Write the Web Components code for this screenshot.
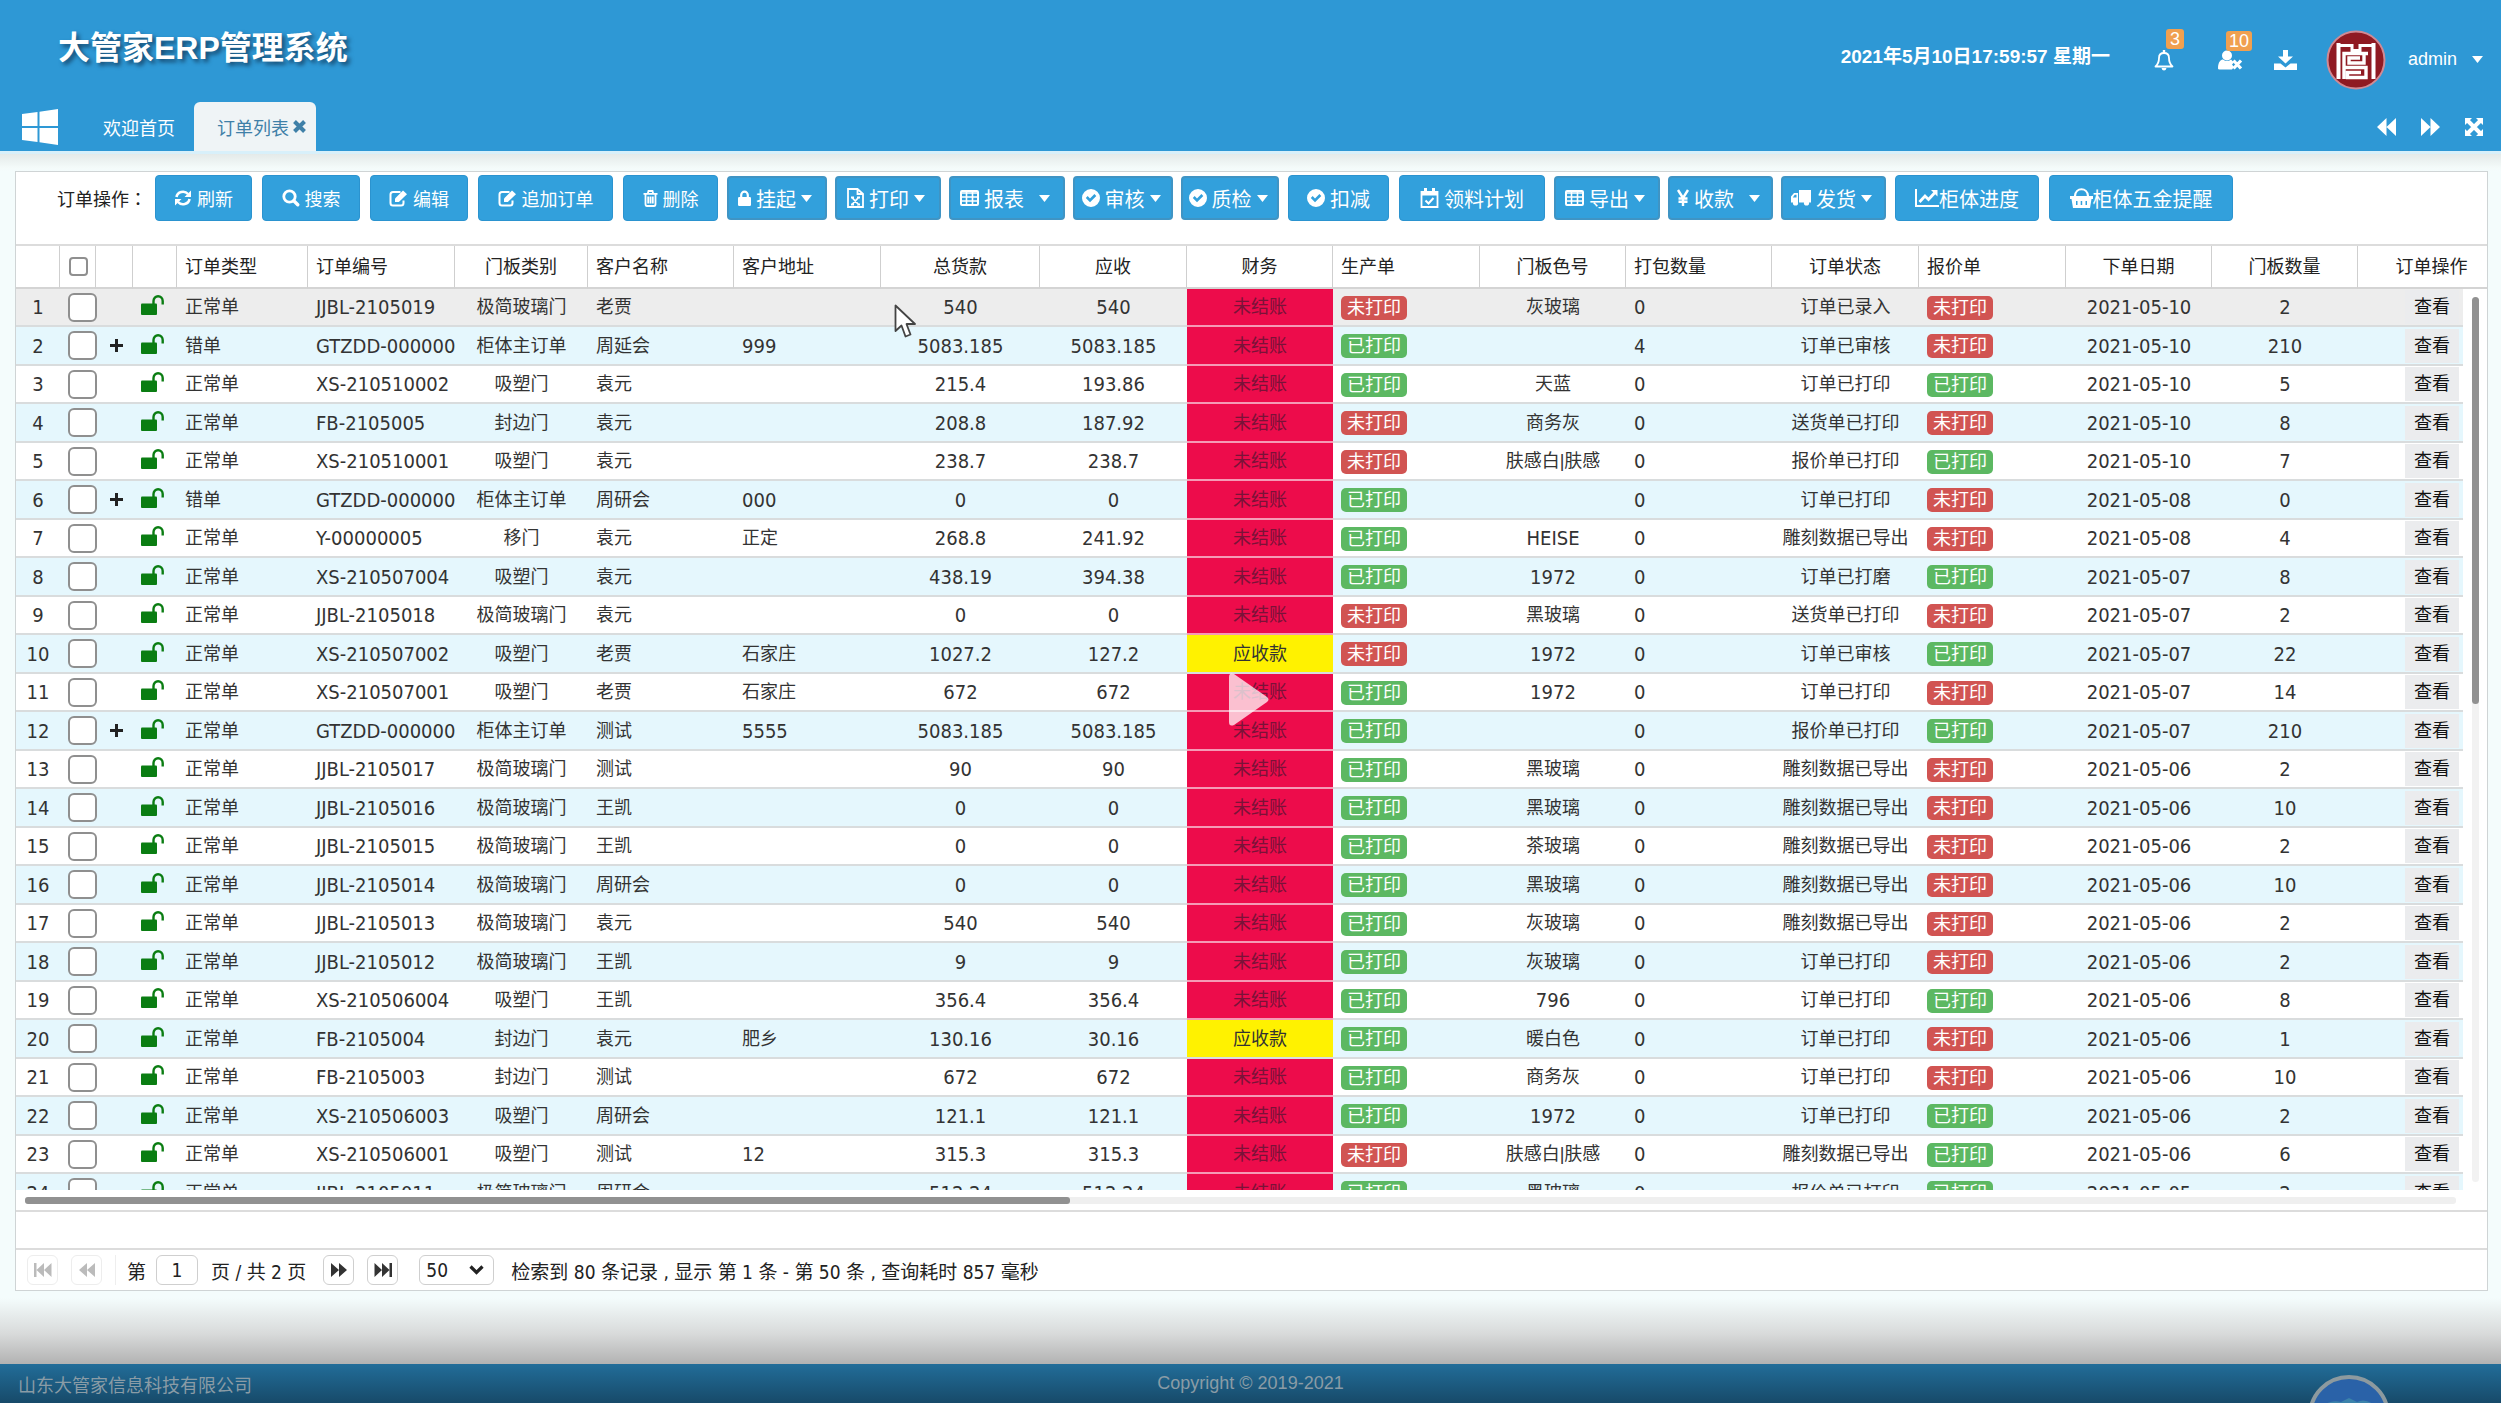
<!DOCTYPE html>
<html lang="zh-CN">
<head>
<meta charset="utf-8">
<title>大管家ERP管理系统</title>
<style>
html,body{height:100%;margin:0}
body{font-family:"Liberation Sans","Noto Sans CJK SC",sans-serif;font-size:18px;color:#333;overflow:hidden}
</style>
</head>
<body>
<erp-app></erp-app>
<script>
const define = (name, html, init) => {
  const tpl = document.createElement('template');
  tpl.innerHTML = html;
  customElements.define(name, class extends HTMLElement {
    constructor(){
      super();
      this.attachShadow({mode:'open'}).append(tpl.content.cloneNode(true));
    }
    connectedCallback(){ if(init && !this.ready){ this.ready = true; init(this, this.shadowRoot); } }
  });
};

/* ---------- icons ---------- */
const S = 'fill="none" stroke="currentColor" stroke-width="2"';
const L = w => `fill="none" stroke="currentColor" stroke-width="${w}"`;
const ICONS = {
  windows:[36,36,'<path d="M0 5 15.500 3V17H0zM17.500 2.700 36 0V17H17.500zM0 19H15.500V33L0 31zM17.500 19H36V36L17.500 33.300z"/>'],
  refresh:[18,16,`<path ${L(2.6)} d="M2.500 7A6.500 6 0 0 1 14 4M15.500 9A6.500 6 0 0 1 4 12"/><path d="M17 .5V7H10.500zM1 15.500V9H7.500z"/>`],
  search:[18,18,`<circle cx="7.500" cy="7.500" r="5.700" ${L(2.8)}/><path ${L(3.4)} stroke-linecap="round" d="M12 12 15.800 15.800"/>`],
  edit:[19,17,`<path ${L(2)} d="M11.500 2H4Q1.500 2 1.500 4.500V13Q1.500 15.500 4 15.500H12Q14.500 15.500 14.500 13V10.500"/><path d="M6 12V8.500L14 .5 18 4.300 9.800 12z"/>`],
  trash:[15,17,`<path ${L(1.8)} d="M.5 3.800H14.500M4.800 3.500 5.500 1H9.500L10.200 3.500M2.500 4V14Q2.500 16 4 16H11Q12.500 16 12.500 14V4M5.200 6.500V13.500M7.500 6.500V13.500M9.800 6.500V13.500"/>`],
  lock:[13,16,`<path ${L(2.2)} d="M3.200 8V5A3.300 3.300 0 0 1 9.800 5V8"/><rect y="7" width="13" height="9" rx="1.200"/>`],
  unlock:[24,20,`<path ${L(2.4)} d="M12.500 10V6A4.600 4.800 0 0 1 21.700 6V9.500"/><rect x="0" y="8.500" width="16" height="11.500" rx="1"/>`],
  file:[17,20,`<path ${L(1.8)} d="M1 1H10.500L16 6V19H1zM10.500 1V6H16"/><path ${L(1.8)} d="M5 9.500 11.500 16.500M11.500 9.500 5 16.500M4 9.500H7M10 9.500H13M4 16.500H7M10 16.500H13"/>`],
  table:[19,16,`<rect x="1" y="1" width="17" height="14" rx="1" ${S}/><path ${L(1.6)} d="M1 3H18M1 7H18M1 11H18M6.500 2V15M12.500 2V15"/>`],
  check:[18,18,'<path fill-rule="evenodd" d="M9 0A9 9 0 1 1 9 18 9 9 0 1 1 9 0zM3.800 9 8 13.200 14.300 7 12.400 5.100 8 9.400 5.700 7.100z"/>'],
  calendar:[19,20,`<path ${L(1.8)} d="M1.500 4H17.500V19H1.500z"/><path d="M1 3H18V7.500H1zM4 0H7V4H4zM12 0H15V4H12z"/><path ${S} d="M5.500 12.500 8.500 15.500 13.500 10"/>`],
  yen:[12,16,`<path ${L(2.4)} d="M1 0 6 8 11 0M6 8V16M1.500 8.500H10.500M1.500 11.800H10.500"/>`],
  truck:[20,16,`<g transform="matrix(-1 0 0 1 20 0)"><path fill-rule="evenodd" d="M0 0H12V12.500H0zM13 3H17L20 6.500V12.500H13zM14.500 4.800V7.600H18.200L16.200 4.800z"/><circle cx="4.500" cy="13" r="2.600"/><circle cx="15.500" cy="13" r="2.600"/></g>`],
  chart:[24,18,`<path ${S} d="M1 0V17H24"/><path ${L(2.8)} d="M4.500 13 10 7 13.500 10.500 20 3.500"/><path d="M22.500 1V7.500L16 1z"/>`],
  basket:[23,20,`<path ${L(2.2)} d="M5 8C5.500-1 17.500-1 18 8"/><path fill-rule="evenodd" d="M0 8H23V11H21.500L20 20H3L1.500 11H0zM6 13V17H7.500V13zM10.700 13V17H12.200V13zM15.500 13V17H17V13z"/>`],
  caret:[11,7,'<path d="M0 0H11L5.500 7z"/>'],
  bell:[20,22,`<path ${L(1.8)} stroke-linejoin="round" d="M1.500 17.500Q5 14.500 5 9 5 4 10 4 15 4 15 9 15 14.500 18.500 17.500z"/><path d="M8.800 1H11.200V4.500H8.800zM7.500 19H12.500Q12 21.500 10 21.500 8 21.500 7.500 19z"/>`],
  userx:[25,19,`<circle cx="9" cy="4.500" r="5"/><path d="M0 17.500C0 10.500 3 8.500 5 8.500Q9 11.500 13 8.500L16 11.500 14 13.500 16 16 14 18.500H1.500Q0 18.500 0 17.500z"/><path ${L(3.2)} d="M15.500 9.500 23 17.500M23 9.500 15.500 17.500"/>`],
  download:[23,22,`<path d="M9 1H14V7.500H19L11.500 14.500 4 7.500H9z"/><path d="M0 14.500H6.500L11.500 18.500 16.500 14.500H23V21H0z"/>`],
  backward:[19,18,'<path d="M0 9 9.500 0V18zM9.500 9 19 0V18z"/>'],
  forward:[19,18,'<path d="M19 9 9.500 0V18zM9.500 9 0 0V18z"/>'],
  first:[18,14,'<path d="M0 0H2.500V14H0zM2.500 7 10 0V14zM10 7 17.500 0V14z"/>'],
  last:[18,14,'<path d="M18 0H15.500V14H18zM15.500 7 8 0V14zM8 7 .5 0V14z"/>'],
  prev:[16,14,'<path d="M0 7 8 0V14zM8 7 16 0V14z"/>'],
  next:[16,14,'<path d="M16 7 8 0V14zM8 7 0 0V14z"/>'],
  expand:[18,18,`<path d="M0 0H7L0 7zM18 0V7L11 0zM0 18V11L7 18zM18 18H11L18 11z"/><path ${L(4)} d="M3 3 15 15M15 3 3 15"/>`],
  close:[13,13,`<path ${L(4)} d="M1.500 1.500 11.500 11.500M11.500 1.500 1.500 11.500"/>`],
  chevron:[15,10,`<path ${L(3.2)} d="M1.500 1.500 7.500 7.500 13.500 1.500"/>`],
  plus:[13,13,`<path ${L(3)} d="M6.500 0V13M0 6.500H13"/>`],
  seal:[60,60,`<circle cx="30" cy="30" r="28.500" fill="#8f1a22" stroke="#d08a94" stroke-width="2"/><g fill="none" stroke="#fff" stroke-width="3"><path d="M12.500 13V49M47.500 13V49" stroke-width="4"/><path d="M12 15.500H26V20.500H34V15.500H48"/><path d="M18 49V23.500H42M38 23V33H23V28H34M18 37.500H40V47.500H21.500V42.500H35" stroke-width="3.400"/></g>`],
  cursor:[24,36,'<path d="M1.500 1.500V27L7.500 21.500 11.500 32.500 16.500 30.500 12.500 20H21z" fill="#fff" stroke="#444" stroke-width="1.800" stroke-linejoin="round"/>'],
  play:[40,53,'<path d="M0 4Q0-1 5 1L38 24Q41 26.500 38 29L5 52Q0 54 0 49z" fill="#fff" fill-opacity=".74"/>'],
  globe:[84,84,'<circle cx="42" cy="42" r="39" fill="#2a62a8" stroke="#8d9a9f" stroke-width="4"/><path d="M8 40Q20 24 34 28L42 24 50 28Q62 22 76 40V60H8z" fill="#3c83ab"/>']
};
define('erp-icon', '<style>:host{display:inline-flex;flex:none}svg{display:block;fill:currentColor;overflow:visible}</style>', (el, root) => {
  const [w,h,body] = ICONS[el.getAttribute('name')];
  root.innerHTML += `<svg width="${w}" height="${h}" viewBox="0 0 ${w} ${h}" aria-hidden="true">${body}</svg>`;
});

/* ---------- header ---------- */
define('erp-header', `
<style>
:host{display:flex;flex-direction:column;height:151px;background:#2e98d5;color:#fff}
.top{display:flex;align-items:center;justify-content:space-between;padding:0 18px 0 58px;height:102px;box-sizing:border-box}
h1{margin:0 0 6px;font-size:32px;line-height:40px;font-weight:700;text-shadow:3px 3px 4px #164a70}
.right{display:flex;align-items:center;margin-top:18px}
time{font-size:19px;line-height:24px;font-weight:700;margin:0 44px 6px 0}
button{all:unset;display:flex;align-items:center;position:relative;cursor:pointer}
.bell{width:64px}.user{width:56px}.down{width:52px}
.badge{position:absolute;top:-20px;left:12px;background:#f0a050;border-radius:3px;font-size:18px;line-height:20px;padding:0 4px}
.user .badge{left:8px;padding:0 3px}
.me{margin-left:22px;gap:15px;padding-bottom:2px}
.bar{display:flex;align-items:flex-end;justify-content:space-between;height:49px;padding:0 18px 0 22px}
.tabs{display:flex;align-items:flex-end}
.tabs>*{height:49px;box-sizing:border-box}
.win{padding-right:29px}
.tab{padding:0 16px}
.on{background:#eff4f6;color:#3f80a8;border-radius:6px 6px 0 0;width:122px;padding:0 0 0 23px;margin-left:3px;gap:4px}
.nav{display:flex;gap:25px;height:49px}
</style>
<div class="top"><h1>大管家ERP管理系统</h1>
 <div class="right"><time>2021年5月10日17:59:57 星期一</time>
  <button class="bell" aria-label="通知"><erp-icon name="bell"></erp-icon><span class="badge">3</span></button>
  <button class="user" aria-label="用户"><erp-icon name="userx"></erp-icon><span class="badge">10</span></button>
  <button class="down" aria-label="下载"><erp-icon name="download"></erp-icon></button>
  <erp-icon name="seal"></erp-icon>
  <button class="me">admin<erp-icon name="caret"></erp-icon></button></div>
</div>
<div class="bar"><nav class="tabs">
  <button class="win" aria-label="开始"><erp-icon name="windows"></erp-icon></button>
  <button class="tab">欢迎首页</button>
  <button class="tab on">订单列表<erp-icon name="close"></erp-icon></button></nav>
 <div class="nav"><button aria-label="左移"><erp-icon name="backward"></erp-icon></button><button aria-label="右移"><erp-icon name="forward"></erp-icon></button><button aria-label="全屏"><erp-icon name="expand"></erp-icon></button></div>
</div>`);

/* ---------- toolbar ---------- */
define('erp-button', `
<style>
:host{display:block;margin:0 1px}
:host([menu]){margin:0}
button{width:var(--w);height:46px;border:1px solid #2b93cf;border-radius:4px;background:#32a0dc;color:#fff;font:inherit;font-size:20px;padding:0;display:flex;align-items:center;justify-content:center;gap:5px;white-space:nowrap}
:host([small]) button{font-size:18px}
:host([tight]) button{gap:0}
:host([menu]) button{height:44px;border-width:2px;border-color:#3f94c4;padding-right:4px}
:host([wide]) .caret{margin-left:10px}
</style>
<button><slot></slot></button>`, (el, root) => {
  const b = root.querySelector('button');
  b.style.setProperty('--w', el.getAttribute('width') + 'px');
  b.insertAdjacentHTML('afterbegin', `<erp-icon name="${el.getAttribute('icon')}"></erp-icon>`);
  if(el.hasAttribute('menu')) b.insertAdjacentHTML('beforeend', '<erp-icon class="caret" name="caret"></erp-icon>');
});
define('erp-toolbar', `
<style>
:host{display:flex;align-items:center;gap:8px;height:72px;padding:0 0 20px 41px;box-sizing:border-box}
div{width:89px;color:#222;white-space:nowrap;display:flex;justify-content:space-between}
.colon{font-family:"Noto Sans CJK TC",sans-serif}
</style><div><span>订单操作</span><span class="colon" lang="zh-TW">：</span></div><slot></slot>`);

/* ---------- grid ---------- */
const P='已', N='未';
const J='极简玻璃门', X='吸塑门', F='封边门', G='柜体主订单', D='订单已打印', K='雕刻数据已导出';
const ROWS = [
 ['正常单','JJBL-2105019',J,'老贾','','540','540',N,'灰玻璃','0','订单已录入',N,'2021-05-10','2'],
 ['错单','GTZDD-000000',G,'周延会','999','5083.185','5083.185',P,'','4','订单已审核',N,'2021-05-10','210'],
 ['正常单','XS-210510002',X,'袁元','','215.4','193.86',P,'天蓝','0',D,P,'2021-05-10','5'],
 ['正常单','FB-2105005',F,'袁元','','208.8','187.92',N,'商务灰','0','送货单已打印',N,'2021-05-10','8'],
 ['正常单','XS-210510001',X,'袁元','','238.7','238.7',N,'肤感白|肤感','0','报价单已打印',P,'2021-05-10','7'],
 ['错单','GTZDD-000000',G,'周研会','000','0','0',P,'','0',D,N,'2021-05-08','0'],
 ['正常单','Y-00000005','移门','袁元','正定','268.8','241.92',P,'HEISE','0',K,N,'2021-05-08','4'],
 ['正常单','XS-210507004',X,'袁元','','438.19','394.38',P,'1972','0','订单已打磨',P,'2021-05-07','8'],
 ['正常单','JJBL-2105018',J,'袁元','','0','0',N,'黑玻璃','0','送货单已打印',N,'2021-05-07','2'],
 ['正常单','XS-210507002',X,'老贾','石家庄','1027.2','127.2',N,'1972','0','订单已审核',P,'2021-05-07','22'],
 ['正常单','XS-210507001',X,'老贾','石家庄','672','672',P,'1972','0',D,N,'2021-05-07','14'],
 ['正常单','GTZDD-000000',G,'测试','5555','5083.185','5083.185',P,'','0','报价单已打印',P,'2021-05-07','210'],
 ['正常单','JJBL-2105017',J,'测试','','90','90',P,'黑玻璃','0',K,N,'2021-05-06','2'],
 ['正常单','JJBL-2105016',J,'王凯','','0','0',P,'黑玻璃','0',K,N,'2021-05-06','10'],
 ['正常单','JJBL-2105015',J,'王凯','','0','0',P,'茶玻璃','0',K,N,'2021-05-06','2'],
 ['正常单','JJBL-2105014',J,'周研会','','0','0',P,'黑玻璃','0',K,N,'2021-05-06','10'],
 ['正常单','JJBL-2105013',J,'袁元','','540','540',P,'灰玻璃','0',K,N,'2021-05-06','2'],
 ['正常单','JJBL-2105012',J,'王凯','','9','9',P,'灰玻璃','0',D,N,'2021-05-06','2'],
 ['正常单','XS-210506004',X,'王凯','','356.4','356.4',P,'796','0',D,P,'2021-05-06','8'],
 ['正常单','FB-2105004',F,'袁元','肥乡','130.16','30.16',P,'暖白色','0',D,N,'2021-05-06','1'],
 ['正常单','FB-2105003',F,'测试','','672','672',P,'商务灰','0',D,N,'2021-05-06','10'],
 ['正常单','XS-210506003',X,'周研会','','121.1','121.1',P,'1972','0',D,P,'2021-05-06','2'],
 ['正常单','XS-210506001',X,'测试','12','315.3','315.3',N,'肤感白|肤感','0',K,P,'2021-05-06','6'],
 ['正常单','JJBL-2105011',J,'周研会','','512.24','512.24',P,'黑玻璃','0','报价单已打印',P,'2021-05-05','2']
];
const WIDTHS = [44,36,37,44,131,147,133,146,147,159,147,146,147,146,146,147,147,146,146,148];
const HEADS = [['订单类型'],['订单编号'],['门板类别',1],['客户名称'],['客户地址'],['总货款',1],['应收',1],['财务',1],['生产单'],['门板色号',1],['打包数量'],['订单状态',1],['报价单'],['下单日期',1],['门板数量',1],['订单操作',1]];
define('erp-tag', `
<style>
:host{display:inline-block;vertical-align:middle;background:#5cb862;color:#fff;border-radius:5px;font-size:18px;line-height:24px;height:24px;padding:0 6px}
:host([pending]){background:#d15452}
</style><slot></slot>`);
define('erp-grid', `
<style>
:host{display:flex;flex-direction:column;min-height:0}
table{border-collapse:separate;border-spacing:0;table-layout:fixed;width:max(100%,var(--total))}
.head{overflow:hidden;border-top:2px solid #dcdcdc;flex:none}
th{height:43px;padding:0 8px 3px;box-sizing:border-box;font-weight:400;text-align:left;border-right:1px solid #cfcfcf;border-bottom:2px solid #d4d4d4;white-space:nowrap;color:#222}
.view{flex:1;min-height:0;display:flex}
.rows{flex:1;min-width:0;overflow:hidden}
td{padding:0 8px;box-sizing:border-box;white-space:nowrap;border-bottom:2px solid #d9dcdd;line-height:24px;overflow:hidden}
tr{height:38px}
tbody tr:nth-child(even){height:39px;background:#e5f7fd}
tbody tr.hot{background:#ededed}
.c{text-align:center}
.n{font-family:"DejaVu Sans Condensed","DejaVu Sans",sans-serif;font-size:20px}
.pick{text-align:center;padding:0;overflow:visible}
th.pick{padding-left:2px}
td.pick{padding-left:8px}
input{appearance:none;display:block;margin:auto;box-sizing:border-box;background:#fff;border:2px solid #8f8f8f}
td input{width:29px;height:29px;margin:0;border-radius:6px}
th input{width:19px;height:19px;border-radius:4px}
td.ic{padding:0 0 0 3px;color:#222}td.ic erp-icon{display:flex;justify-content:center}
td.ic.k{color:#0a7d12;padding:0 5px 4px 0}
.debt{background:#ed0c4b;color:#7a1238;border-bottom-color:#f59ab5}
.due{background:#fff200;color:#333}
td button{all:unset;background:#ebecee;color:#111;padding:0 9px;height:34px;line-height:32px;vertical-align:middle}
.v{width:24px;flex:none;display:flex;justify-content:center;padding:8px 0;box-sizing:border-box}
.v div{width:7px;background:#f2f2f2;border-radius:4px}
.v i{display:block;height:46%;background:#919191;border-radius:4px}
.h{height:20px;flex:none;padding:7px 31px 0 9px;box-sizing:border-box}
.h div{height:7px;background:#efefef;border-radius:3px}
.h i{display:block;height:7px;width:43%;background:#919191;border-radius:3px}
</style>
<div class="head"><table><thead><tr></tr></thead></table></div>
<div class="view"><div class="rows"><table><tbody></tbody></table></div><div class="v"><div><i></i></div></div></div>
<div class="h"><div><i></i></div></div>`, (el, root) => {
  el.style.setProperty('--total', WIDTHS.reduce((a,b)=>a+b) + 'px');
  const cols = '<colgroup>' + WIDTHS.map(w=>`<col style="width:${w}px">`).join('') + '</colgroup>';
  root.querySelectorAll('table').forEach(t => t.insertAdjacentHTML('afterbegin', cols));
  root.querySelector('thead tr').innerHTML = '<th></th><th class="pick"><input type="checkbox" aria-label="全选"></th><th></th><th></th>' +
    HEADS.map(([t,c]) => `<th${c?' class="c"':''}>${t}</th>`).join('');
  const cell = (t,c) => `<td class="${c?'c ':''}${/[\u4e00-\u9fff]/.test(t)?'':'n'}">${t}</td>`;
  const tag = s => `<td><erp-tag${s===N?' pending':''}>${s}打印</erp-tag></td>`;
  root.querySelector('tbody').innerHTML = ROWS.map((r,i) => {
    const n = i+1, due = n===10 || n===20;
    return `<tr${i?'':' class="hot"'}><td class="c n">${n}</td>
    <td class="pick"><input type="checkbox" aria-label="选择第 ${n} 行"></td>
    <td class="ic">${[2,6,12].includes(n)?'<erp-icon name="plus"></erp-icon>':''}</td>
    <td class="ic k"><erp-icon name="unlock"></erp-icon></td>` +
    cell(r[0])+cell(r[1])+cell(r[2],1)+cell(r[3])+cell(r[4])+cell(r[5],1)+cell(r[6],1)+
    `<td class="c ${due?'due':'debt'}">${due?'应收款':'未结账'}</td>`+
    tag(r[7])+cell(r[8],1)+cell(r[9])+cell(r[10],1)+tag(r[11])+cell(r[12],1)+cell(r[13],1)+
    '<td class="c"><button>查看</button></td></tr>';
  }).join('');
});

/* ---------- pager ---------- */
define('erp-pager', `
<style>
:host{display:flex;align-items:center;height:40px;padding-left:11px;color:#222;font-size:19px;font-family:"DejaVu Sans Condensed","Noto Sans CJK SC",sans-serif;border-top:2px solid #dcdcdc;white-space:nowrap}
button{box-sizing:border-box;width:31px;height:30px;padding:0;border:1px solid #cfcfcf;border-radius:6px;background:#fff;color:#333;display:flex;align-items:center;justify-content:center;margin-right:13px}
button:disabled{color:#bbb;border-color:#ededed}
label{display:flex;align-items:center;gap:10px;border-left:1px solid #eee;padding-left:11px;margin-right:17px}
label span{margin-left:3px}
input{box-sizing:border-box;width:42px;height:30px;border:1px solid #cfcfcf;border-radius:6px;font:inherit;text-align:center;color:inherit;padding:0}
.sel{display:grid;width:75px;margin:0 17px 0 8px;align-items:center}
.sel>*{grid-area:1/1}
select{appearance:none;width:75px;height:30px;border:1px solid #cfcfcf;border-radius:6px;background:#fff;font:inherit;color:inherit;padding:0 0 0 6px}
.sel erp-icon{justify-self:end;margin-right:10px;pointer-events:none}
</style>
<button disabled aria-label="首页"><erp-icon name="first"></erp-icon></button>
<button disabled aria-label="上一页"><erp-icon name="prev"></erp-icon></button>
<label>第 <input value="1"> <span>页 / 共 2 页</span></label>
<button aria-label="下一页"><erp-icon name="next"></erp-icon></button>
<button aria-label="末页"><erp-icon name="last"></erp-icon></button>
<span class="sel"><select aria-label="每页条数"><option>50</option></select><erp-icon name="chevron"></erp-icon></span>
<span>检索到 80 条记录 , 显示 第 1 条 - 第 50 条 , 查询耗时 857 毫秒</span>`);

/* ---------- footer ---------- */
define('erp-footer', `
<style>
:host{display:grid;grid-template:39px / 1fr auto 1fr;align-items:center;height:39px;padding:0 18px;background:linear-gradient(#226d99,#174a69);color:#8a9ca6;overflow:hidden;flex:none;box-sizing:border-box}
erp-icon{justify-self:end;align-self:start;margin:10px 92px 0 0}
</style>
<span>山东大管家信息科技有限公司</span><span>Copyright © 2019-2021</span><erp-icon name="globe"></erp-icon>`);

/* ---------- app ---------- */
define('erp-app', `
<style>
:host{display:flex;flex-direction:column;height:100vh;position:relative;background:#f4fcfc;overflow:hidden}
erp-header{flex:none}
main{flex:1;min-height:0;display:flex;flex-direction:column;box-sizing:border-box;padding:17px 13px 73px 15px;border-top:3px solid #d8f0fa;background:linear-gradient(#e4eae9,#f4fbfa 14px,transparent 18px),linear-gradient(to top,#b2b2b2,#d8dada 30px,#f4fcfc 66px)}
.panel{flex:1;min-height:0;display:flex;flex-direction:column;background:#fff;border:1px solid #cfd4d5}
erp-grid{flex:1}
.sum{height:36px;border-top:2px solid #dcdcdc;flex:none}
erp-toolbar,erp-pager{flex:none}
.cursor{position:absolute;left:894px;top:304px}
.play{position:absolute;left:50%;top:50%;transform:translate(-22px,-29px)}
</style>
<erp-header></erp-header>
<main><section class="panel">
<erp-toolbar>
<erp-button small width="97" icon="refresh">刷新</erp-button>
<erp-button small width="98" icon="search">搜索</erp-button>
<erp-button small width="98" icon="edit">编辑</erp-button>
<erp-button small width="135" icon="edit">追加订单</erp-button>
<erp-button small width="95" icon="trash">删除</erp-button>
<erp-button menu width="100" icon="lock">挂起</erp-button>
<erp-button menu width="106" icon="file">打印</erp-button>
<erp-button menu wide width="116" icon="table">报表</erp-button>
<erp-button menu width="100" icon="check">审核</erp-button>
<erp-button menu width="98" icon="check">质检</erp-button>
<erp-button width="101" icon="check">扣减</erp-button>
<erp-button width="146" icon="calendar">领料计划</erp-button>
<erp-button menu width="106" icon="table">导出</erp-button>
<erp-button menu wide width="105" icon="yen">收款</erp-button>
<erp-button menu width="105" icon="truck">发货</erp-button>
<erp-button tight width="144" icon="chart">柜体进度</erp-button>
<erp-button tight width="184" icon="basket">柜体五金提醒</erp-button>
</erp-toolbar>
<erp-grid></erp-grid>
<div class="sum"></div>
<erp-pager></erp-pager>
</section></main>
<erp-footer></erp-footer>
<erp-icon class="cursor" name="cursor"></erp-icon>
<erp-icon class="play" name="play"></erp-icon>`);
</script>
</body>
</html>
